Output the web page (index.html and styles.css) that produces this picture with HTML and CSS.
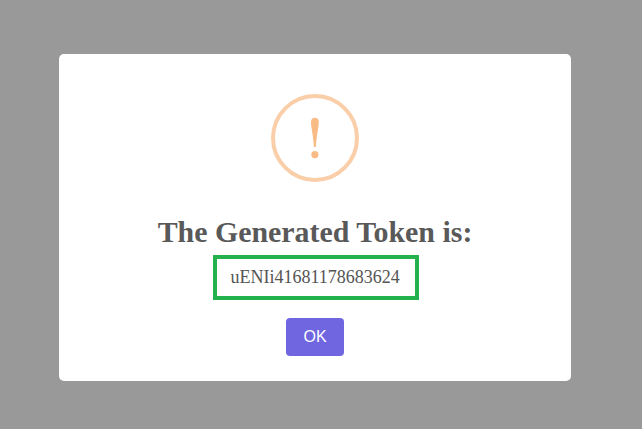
FILE: index.html
```html
<!DOCTYPE html>
<html lang="en">
<head>
<meta charset="utf-8">
<title>Generated Token</title>
<link rel="stylesheet" href="styles.css">
</head>
<body>
<main class="backdrop">
<section class="popup" role="dialog" aria-labelledby="title">
<div class="icon">
<svg class="mark" viewBox="0 0 80 80" aria-hidden="true">
<path d="M36 24.3C36 21.2 37.3 19.7 39.9 19.7S43.8 21.2 43.8 24.3C43.8 29 41.6 37.5 40.9 49H38.9C38.2 37.5 36 29 36 24.3Z"/>
<circle cx="39.9" cy="56.6" r="3.6"/>
</svg>
</div>
<h2 class="title" id="title">The Generated Token is:</h2>
<div class="token">uENIi41681178683624</div>
<button class="confirm" type="button">OK</button>
</section>
</main>
</body>
</html>
```

FILE: styles.css
```css
* { box-sizing: border-box; }
body { margin: 0; font-family: "Liberation Serif", serif; }
.backdrop { height: 429px; padding: 54px 0 0 59px; background: #999; overflow: hidden; }
.popup { width: 512px; height: 327px; background: #fff; border-radius: 5px; display: flex; flex-direction: column; align-items: center; }
.icon { width: 88px; height: 88px; margin-top: 40px; border: 4px solid #facea8; border-radius: 50%; }
.mark { display: block; width: 80px; height: 80px; fill: #f8bb86; }
.title { margin: 32px 0 0; font-size: 29.9px; line-height: 36px; color: #595959; white-space: nowrap; }
.token { width: 206px; height: 45px; margin: 5px 0 0 154px; padding-left: 13.5px; border: 4px solid #22b14c; color: #545454; font-size: 18px; line-height: 37px; align-self: flex-start; }
.confirm { width: 58px; height: 38px; margin-top: 18px; padding: 0; border: 0; border-radius: 4px; background: #7066e0; color: #fff; font: 16px "Liberation Sans", sans-serif; }
```
